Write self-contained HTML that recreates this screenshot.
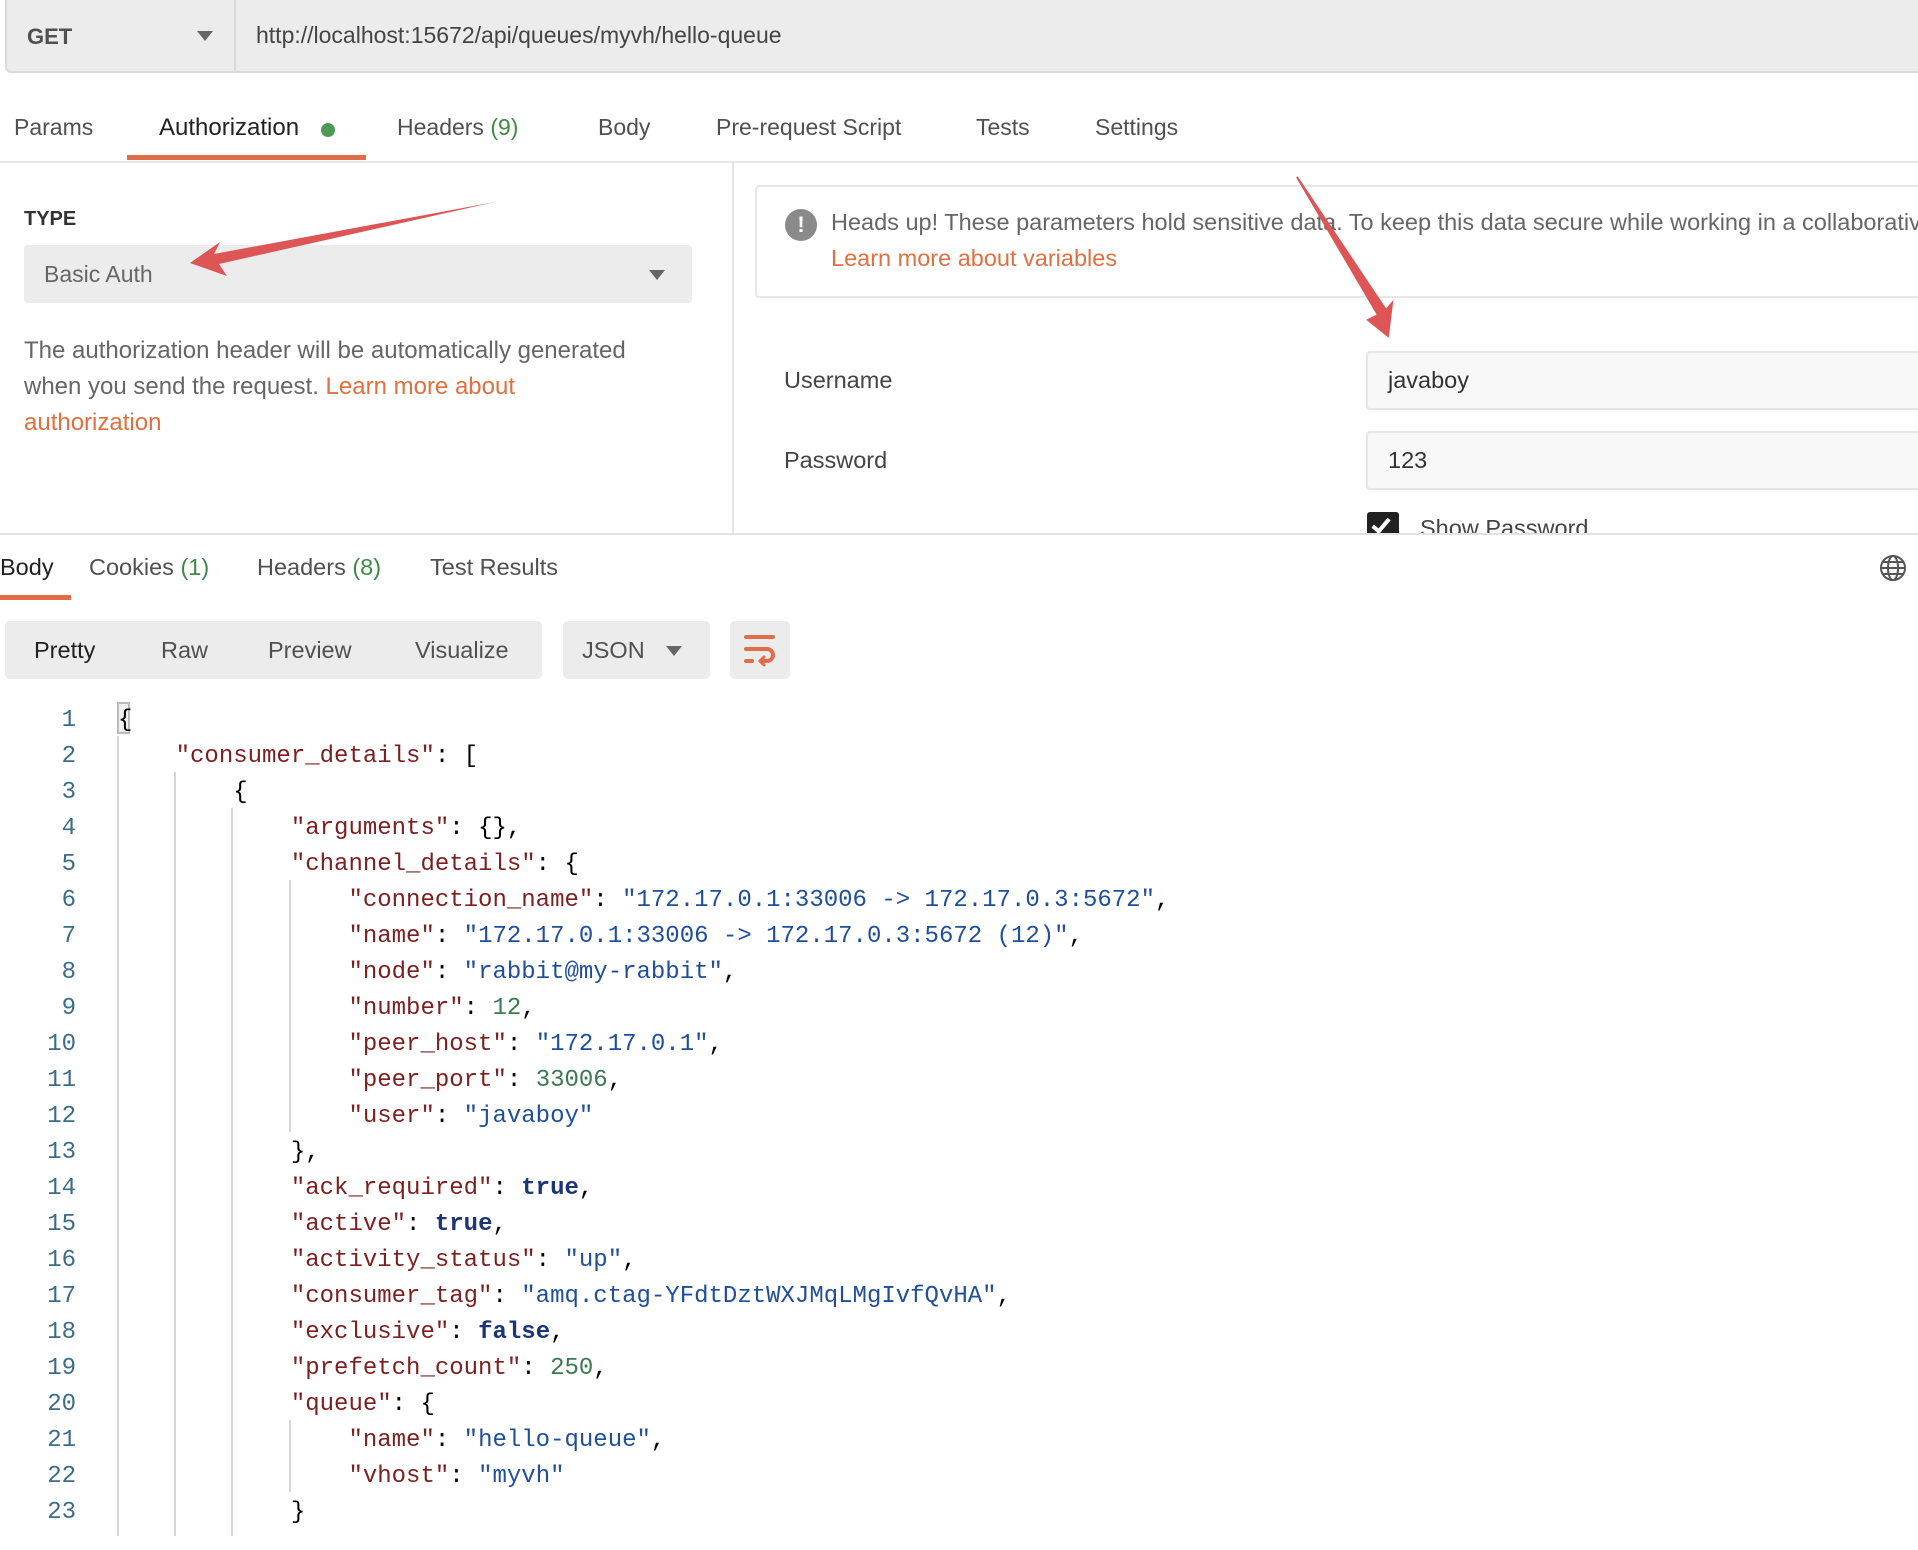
<!DOCTYPE html>
<html><head><meta charset="utf-8"><style>
*{margin:0;padding:0;box-sizing:border-box}
body{width:1918px;height:1550px;background:#fff;position:relative;overflow:hidden;font-family:"Liberation Sans",sans-serif;color:#505050}
.a{position:absolute;white-space:nowrap}
.tab{font-size:23px;top:114px;color:#505050}
.code{font-family:"Liberation Mono",monospace;font-size:24px;color:#000}
.ln{position:absolute;left:0;width:76px;text-align:right;font-family:"Liberation Mono",monospace;font-size:24px;color:#3b6d8a;height:832px;overflow:hidden}
.k{color:#7d1f1f}.s{color:#1f4f9c}.n{color:#3b7a4f}.b{color:#1c3578;font-weight:bold}
.g{position:absolute;width:2px;background:#d6d6d6}
</style></head><body>
<div class="a" style="left:5px;top:0;width:1913px;height:73px;background:#ececec;border:2px solid #dadada;border-top:none;border-right:none;border-radius:0 0 0 6px"></div>
<div class="a" style="left:234px;top:0;width:2px;height:72px;background:#dadada"></div>
<div class="a" style="left:27px;top:24px;font-size:22px;font-weight:bold;color:#505050">GET</div>
<div class="a" style="left:197px;top:31px;width:0;height:0;border-left:8px solid transparent;border-right:8px solid transparent;border-top:10px solid #666"></div>
<div class="a" style="left:256px;top:22px;font-size:23px;color:#444">http://localhost:15672/api/queues/myvh/hello-queue</div>
<div class="a tab" style="left:14px">Params</div>
<div class="a tab" style="left:159px;color:#222;font-size:24px;top:114px">Authorization</div>
<div class="a" style="left:321px;top:123px;width:14px;height:14px;border-radius:50%;background:#4e9a55"></div>
<div class="a tab" style="left:397px">Headers <span style="color:#3e8a45">(9)</span></div>
<div class="a tab" style="left:598px">Body</div>
<div class="a tab" style="left:716px">Pre-request Script</div>
<div class="a tab" style="left:976px">Tests</div>
<div class="a tab" style="left:1095px">Settings</div>
<div class="a" style="left:127px;top:155px;width:239px;height:5px;background:#e06c48"></div>
<div class="a" style="left:0;top:161px;width:1918px;height:2px;background:#e6e6e6"></div>
<div class="a" style="left:732px;top:163px;width:2px;height:372px;background:#e6e6e6"></div>
<div class="a" style="left:24px;top:208px;font-size:20px;font-weight:bold;color:#333">TYPE</div>
<div class="a" style="left:24px;top:245px;width:668px;height:58px;background:#ececec;border-radius:4px"></div>
<div class="a" style="left:44px;top:261px;font-size:23px;color:#666">Basic Auth</div>
<div class="a" style="left:649px;top:270px;width:0;height:0;border-left:8px solid transparent;border-right:8px solid transparent;border-top:10px solid #666"></div>
<div class="a" style="left:24px;top:333px;font-size:24px;line-height:36px;color:#666">The authorization header will be automatically generated<br>when you send the request. <span style="color:#e0703f">Learn more about</span><br><span style="color:#e0703f">authorization</span></div>
<div class="a" style="left:755px;top:185px;width:1170px;height:113px;border:2px solid #e8e8e8;border-radius:4px"></div>
<div class="a" style="left:785px;top:209px;width:32px;height:32px;border-radius:50%;background:#8a8a8a;color:#fff;font-weight:bold;font-size:22px;text-align:center;line-height:32px">!</div>
<div class="a" style="left:831px;top:209px;width:1087px;overflow:hidden;font-size:23.5px;color:#666">Heads up! These parameters hold sensitive data. To keep this data secure while working in a collaborative environment</div>
<div class="a" style="left:831px;top:245px;font-size:23.5px;color:#e0703f">Learn more about variables</div>
<div class="a" style="left:784px;top:367px;font-size:23.5px;color:#444">Username</div>
<div class="a" style="left:784px;top:447px;font-size:23.5px;color:#444">Password</div>
<div class="a" style="left:1366px;top:351px;width:560px;height:59px;background:#f8f8f8;border:2px solid #e6e6e6;border-radius:4px"></div>
<div class="a" style="left:1388px;top:367px;font-size:23.5px;color:#333">javaboy</div>
<div class="a" style="left:1366px;top:431px;width:560px;height:59px;background:#f8f8f8;border:2px solid #e6e6e6;border-radius:4px"></div>
<div class="a" style="left:1388px;top:447px;font-size:23.5px;color:#333">123</div>
<div class="a" style="left:1367px;top:512px;width:32px;height:23px;background:#222;border-radius:3px 3px 0 0;overflow:hidden"><div style="position:absolute;left:9px;top:3px;width:10px;height:18px;border:solid #fff;border-width:0 4px 4px 0;transform:rotate(40deg)"></div></div>
<div class="a" style="left:1420px;top:515px;height:20px;overflow:hidden;font-size:23.5px;color:#444">Show Password</div>
<div class="a" style="left:0;top:533px;width:1918px;height:2px;background:#e2e2e2"></div>
<svg class="a" style="left:0;top:0" width="1918" height="600"><polygon points="495,202 214,254 220,242 190,263 227,276 219,264" fill="#dd5555"/><polygon points="1297,177 1378,315 1368,320 1388,336 1392,303 1386,310" fill="#dd5555" stroke="#dd5555" stroke-width="2"/></svg>
<div class="a" style="left:0;top:554px;font-size:23.5px;color:#222">Body</div>
<div class="a" style="left:89px;top:554px;font-size:23.5px">Cookies <span style="color:#3e8a45">(1)</span></div>
<div class="a" style="left:257px;top:554px;font-size:23.5px">Headers <span style="color:#3e8a45">(8)</span></div>
<div class="a" style="left:430px;top:554px;font-size:23.5px">Test Results</div>
<div class="a" style="left:0;top:595px;width:71px;height:5px;background:#e06c48"></div>
<svg class="a" style="left:1879px;top:554px" width="28" height="28" viewBox="0 0 28 28" fill="none" stroke="#555" stroke-width="2"><circle cx="14" cy="14" r="12"/><ellipse cx="14" cy="14" rx="5" ry="12"/><line x1="2" y1="14" x2="26" y2="14"/><line x1="4" y1="8" x2="24" y2="8"/><line x1="4" y1="20" x2="24" y2="20"/></svg>
<div class="a" style="left:5px;top:621px;width:537px;height:58px;background:#ececec;border-radius:5px"></div>
<div class="a" style="left:34px;top:637px;font-size:23.5px;color:#222">Pretty</div>
<div class="a" style="left:161px;top:637px;font-size:23.5px">Raw</div>
<div class="a" style="left:268px;top:637px;font-size:23.5px">Preview</div>
<div class="a" style="left:415px;top:637px;font-size:23.5px">Visualize</div>
<div class="a" style="left:563px;top:621px;width:147px;height:58px;background:#ececec;border-radius:5px"></div>
<div class="a" style="left:582px;top:637px;font-size:23.5px">JSON</div>
<div class="a" style="left:666px;top:646px;width:0;height:0;border-left:8px solid transparent;border-right:8px solid transparent;border-top:10px solid #666"></div>
<div class="a" style="left:730px;top:621px;width:60px;height:58px;background:#ececec;border-radius:5px"></div>
<svg class="a" style="left:743px;top:633px" width="34" height="34" viewBox="0 0 34 34" fill="none" stroke="#e06c48" stroke-width="4" stroke-linecap="round"><line x1="3" y1="4" x2="30" y2="4"/><path d="M3 16 H24 a6 6 0 0 1 0 12 H18"/><line x1="3" y1="28" x2="9" y2="28"/><path d="M21 24 l-4 4 4 4" stroke-width="3"/></svg>
<div class="a" style="left:117px;top:702px;width:13px;height:32px;border:2px solid #bbb;background:#f0f0f0"></div>
<div class="g" style="left:117px;top:736px;height:800px"></div>
<div class="g" style="left:174px;top:772px;height:764px"></div>
<div class="g" style="left:231px;top:808px;height:728px"></div>
<div class="g" style="left:289px;top:880px;height:252px"></div>
<div class="g" style="left:289px;top:1420px;height:72px"></div>
<div class="a" style="left:0;top:703px;line-height:36px">
<div style="position:relative">
<div class="ln" style="top:0">1<br>2<br>3<br>4<br>5<br>6<br>7<br>8<br>9<br>10<br>11<br>12<br>13<br>14<br>15<br>16<br>17<br>18<br>19<br>20<br>21<br>22<br>23<br>24</div>
<pre class="code" style="position:absolute;left:118px;top:0;line-height:36px;height:832px;overflow:hidden">{
    <span class="k">"consumer_details"</span>: [
        {
            <span class="k">"arguments"</span>: {},
            <span class="k">"channel_details"</span>: {
                <span class="k">"connection_name"</span>: <span class="s">"172.17.0.1:33006 -&gt; 172.17.0.3:5672"</span>,
                <span class="k">"name"</span>: <span class="s">"172.17.0.1:33006 -&gt; 172.17.0.3:5672 (12)"</span>,
                <span class="k">"node"</span>: <span class="s">"rabbit@my-rabbit"</span>,
                <span class="k">"number"</span>: <span class="n">12</span>,
                <span class="k">"peer_host"</span>: <span class="s">"172.17.0.1"</span>,
                <span class="k">"peer_port"</span>: <span class="n">33006</span>,
                <span class="k">"user"</span>: <span class="s">"javaboy"</span>
            },
            <span class="k">"ack_required"</span>: <span class="b">true</span>,
            <span class="k">"active"</span>: <span class="b">true</span>,
            <span class="k">"activity_status"</span>: <span class="s">"up"</span>,
            <span class="k">"consumer_tag"</span>: <span class="s">"amq.ctag-YFdtDztWXJMqLMgIvfQvHA"</span>,
            <span class="k">"exclusive"</span>: <span class="b">false</span>,
            <span class="k">"prefetch_count"</span>: <span class="n">250</span>,
            <span class="k">"queue"</span>: {
                <span class="k">"name"</span>: <span class="s">"hello-queue"</span>,
                <span class="k">"vhost"</span>: <span class="s">"myvh"</span>
            }
        },</pre>
</div></div>
<div class="a" style="left:0;top:1536px;width:1918px;height:14px;background:#fff"></div>
</body></html>
